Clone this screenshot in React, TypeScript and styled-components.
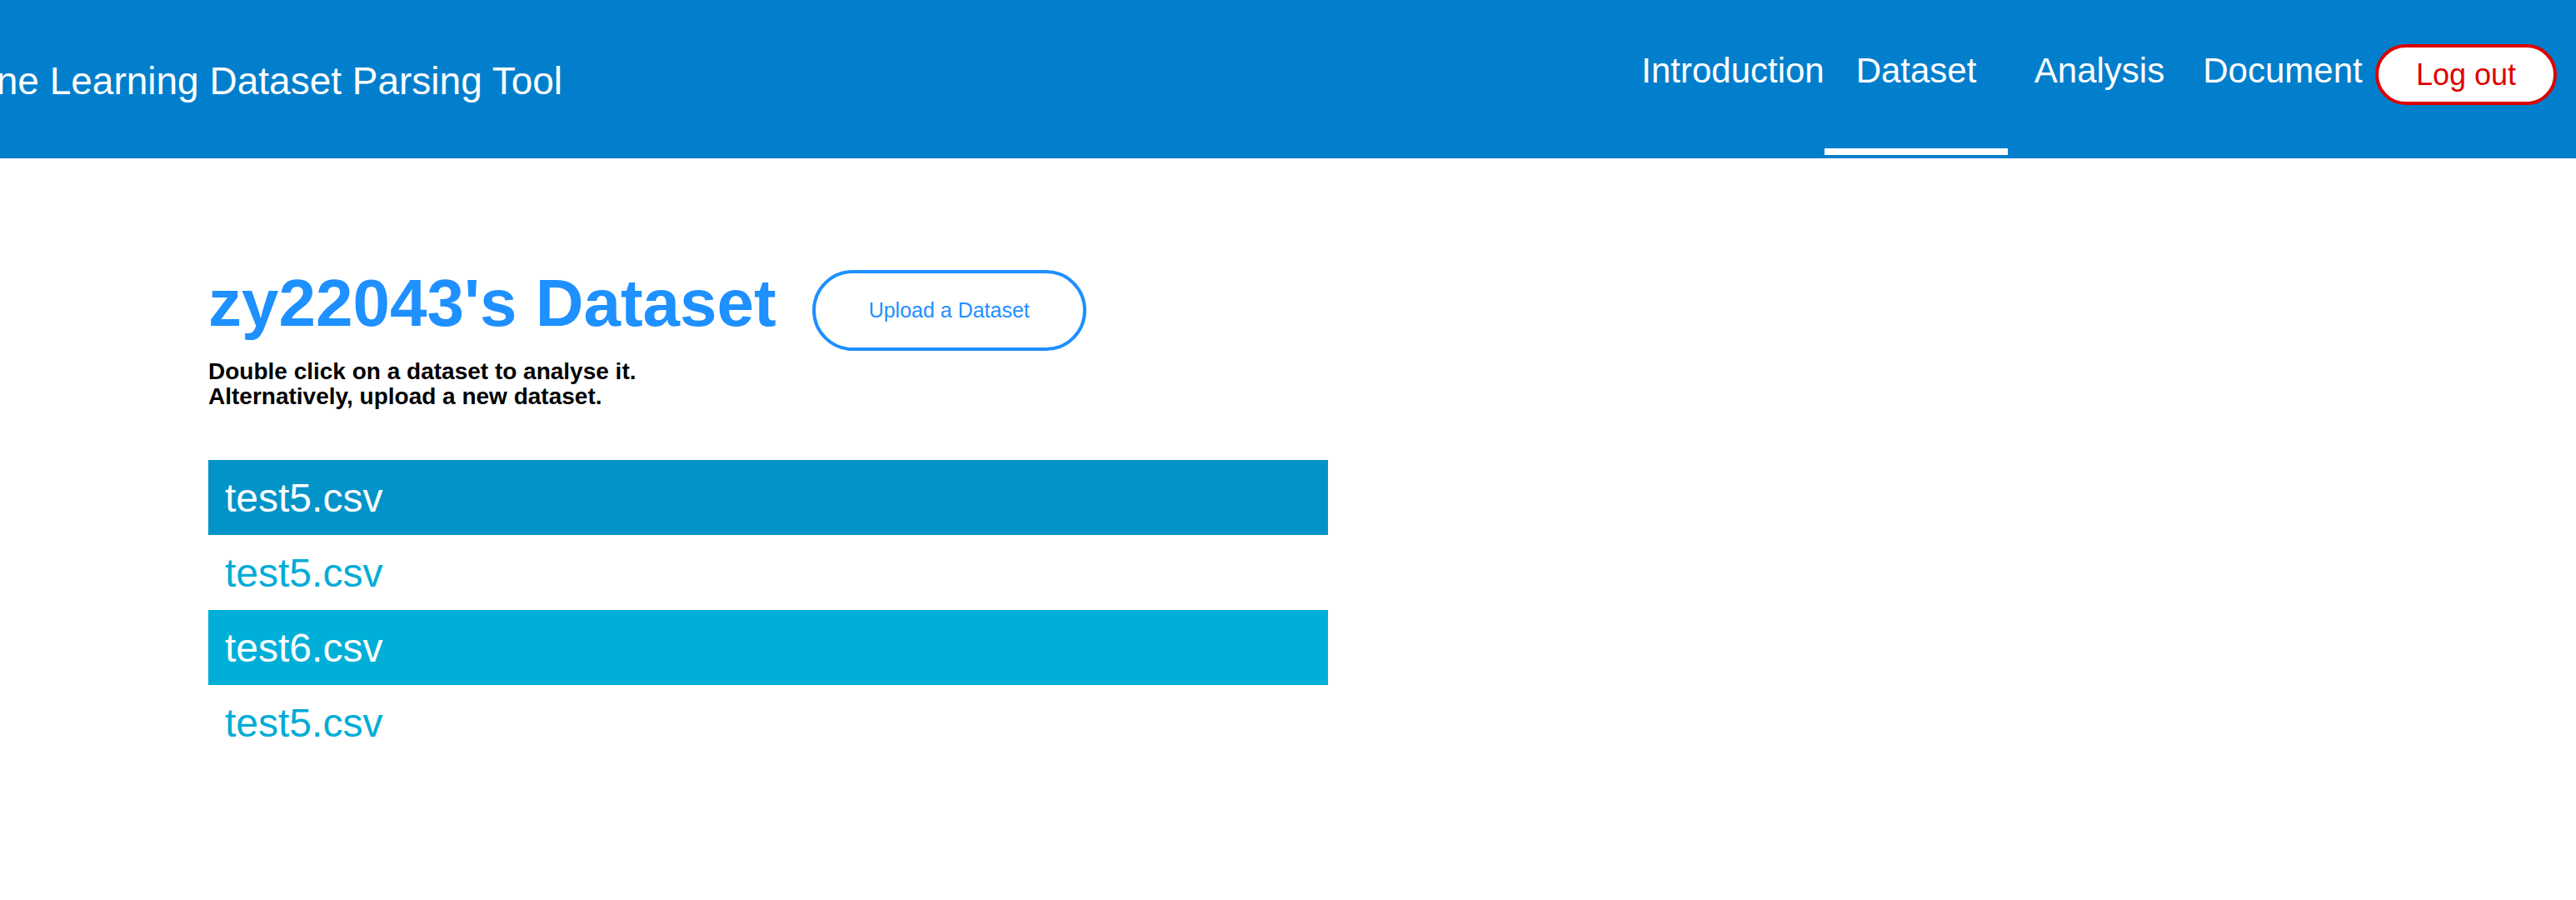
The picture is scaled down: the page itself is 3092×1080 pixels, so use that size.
import React from "react";
import styled, { createGlobalStyle } from "styled-components";

const GlobalStyle = createGlobalStyle`
  html, body {
    margin: 0;
    padding: 0;
    background: #ffffff;
    font-family: "Liberation Sans", Arial, Helvetica, sans-serif;
    overflow: hidden;
  }
  * { box-sizing: border-box; }
`;

const Page = styled.div`
  width: 3092px;
  min-height: 1080px;
  background: #ffffff;
`;

const Header = styled.header`
  height: 190px;
  background: #027fcc;
  display: flex;
  justify-content: space-between;
  align-items: stretch;
  padding-right: 23px;
  overflow: hidden;
`;

const Title = styled.div`
  margin-left: -127px;
  align-self: center;
  color: #ffffff;
  font-size: 46px;
  line-height: 52px;
  white-space: nowrap;
  padding-top: 4px;
`;

const Right = styled.div`
  display: flex;
  align-items: flex-start;
`;

const NavList = styled.nav`
  display: flex;
  align-self: stretch;
`;

const NavItem = styled.a<{ $active?: boolean }>`
  position: relative;
  width: 220px;
  height: 190px;
  display: flex;
  justify-content: center;
  align-items: flex-start;
  padding-top: 61px;
  color: #ffffff;
  font-size: 42px;
  line-height: 48px;
  white-space: nowrap;
  text-decoration: none;
  cursor: pointer;

  &::after {
    content: "";
    display: ${(p) => (p.$active ? "block" : "none")};
    position: absolute;
    left: 0;
    right: 0;
    bottom: 4px;
    height: 8px;
    background: #ffffff;
  }
`;

const LogoutButton = styled.button`
  margin-top: 53px;
  margin-left: 1px;
  width: 218px;
  height: 73px;
  border: 4px solid #dd0000;
  border-radius: 37px;
  background: #ffffff;
  color: #dd0000;
  font-family: "Liberation Sans", Arial, Helvetica, sans-serif;
  font-size: 36px;
  line-height: 40px;
  padding: 0;
  cursor: pointer;
`;

const Main = styled.main`
  padding: 134px 0 0 250px;
`;

const HeadingRow = styled.div`
  display: flex;
  align-items: flex-start;
  gap: 43px;
`;

const Heading = styled.h1`
  margin: 0;
  color: #1e90ff;
  font-size: 80px;
  line-height: 80px;
  font-weight: 700;
  white-space: nowrap;
`;

const UploadButton = styled.button`
  width: 329px;
  height: 97px;
  border: 4px solid #1e90ff;
  border-radius: 49px;
  background: #ffffff;
  color: #1e90ff;
  font-family: "Liberation Sans", Arial, Helvetica, sans-serif;
  font-size: 25px;
  padding: 0;
  cursor: pointer;
`;

const Hint = styled.p`
  margin: 10px 0 0 0;
  color: #000000;
  font-size: 28px;
  line-height: 30px;
  font-weight: 700;
`;

const List = styled.ul`
  list-style: none;
  margin: 61px 0 0 0;
  padding: 0;
  width: 1344px;
`;

const Row = styled.li<{ $bg?: string }>`
  height: 90px;
  display: flex;
  align-items: center;
  padding-left: 20px;
  font-size: 48px;
  background: ${(p) => p.$bg ?? "transparent"};
  color: ${(p) => (p.$bg ? "#ffffff" : "#00acd6")};
  cursor: pointer;
`;

const datasets: { name: string; bg?: string }[] = [
  { name: "test5.csv", bg: "#0294c9" },
  { name: "test5.csv" },
  { name: "test6.csv", bg: "#00afd8" },
  { name: "test5.csv" },
];

export default function App() {
  return (
    <Page>
      <GlobalStyle />
      <Header>
        <Title>Machine Learning Dataset Parsing Tool</Title>
        <Right>
          <NavList>
            <NavItem>Introduction</NavItem>
            <NavItem $active>Dataset</NavItem>
            <NavItem>Analysis</NavItem>
            <NavItem>Document</NavItem>
          </NavList>
          <LogoutButton>Log out</LogoutButton>
        </Right>
      </Header>
      <Main>
        <HeadingRow>
          <Heading>zy22043's Dataset</Heading>
          <UploadButton>Upload a Dataset</UploadButton>
        </HeadingRow>
        <Hint>
          Double click on a dataset to analyse it.
          <br />
          Alternatively, upload a new dataset.
        </Hint>
        <List>
          {datasets.map((d, i) => (
            <Row key={i} $bg={d.bg}>
              {d.name}
            </Row>
          ))}
        </List>
      </Main>
    </Page>
  );
}
